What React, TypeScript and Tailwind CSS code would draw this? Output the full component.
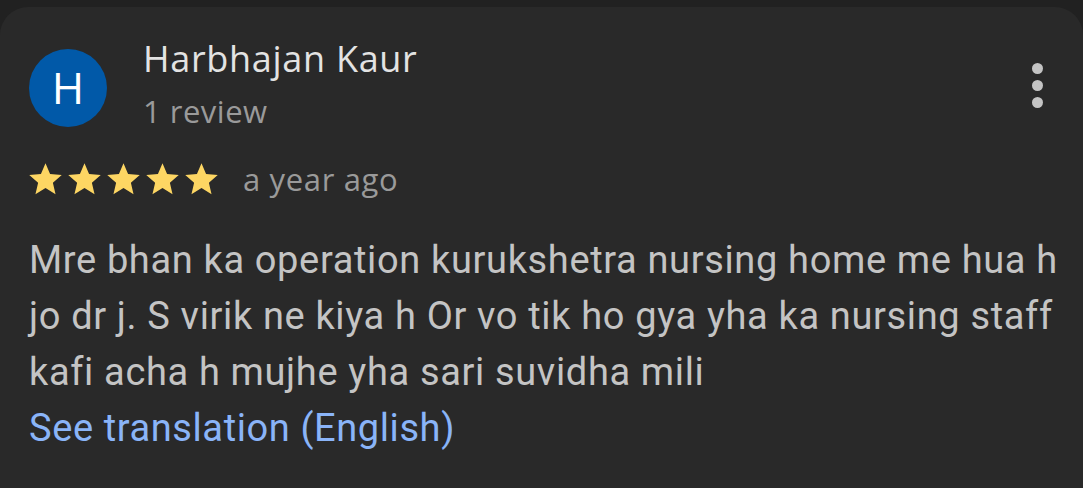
import React from 'react';

const Star: React.FC = () => (
  <svg viewBox="0 0 24 24" className="h-[39px] w-[39px]" fill="#fdd663">
    <path d="M12 17.27 18.18 21l-1.64-7.03L22 9.24l-7.19-.61L12 2 9.19 8.63 2 9.24l5.46 4.73L5.82 21z" />
  </svg>
);

export default function App() {
  return (
    <div className="h-[488px] w-[1083px] overflow-hidden bg-[#212121] pt-[7px]">
      <div className="h-full rounded-t-[28px] bg-[#292929] pl-[29px] pr-[14px] font-['Roboto',sans-serif]">
        {/* header */}
        <div className="flex items-start pt-[42px]">
          <div className="flex h-[78px] w-[78px] shrink-0 items-center justify-center rounded-full bg-[#0159a8] pb-[3px] text-[44px] leading-none text-white font-['Open_Sans',sans-serif]">
            H
          </div>
          <div className="-mt-[12px] ml-[36px] flex-1 font-['Open_Sans',sans-serif]">
            <div className="text-[36px] leading-[44px] tracking-[0.7px] text-[#e3e3e3]">Harbhajan Kaur</div>
            <div className="mt-[12px] text-[31px] leading-[36px] tracking-[0.5px] text-[#9a9a9a]">1 review</div>
          </div>
          <div className="mr-[26px] mt-[14px] flex flex-col items-center gap-[6px]">
            <span className="h-[11px] w-[11px] rounded-full bg-[#c4c4c4]" />
            <span className="h-[11px] w-[11px] rounded-full bg-[#c4c4c4]" />
            <span className="h-[11px] w-[11px] rounded-full bg-[#c4c4c4]" />
          </div>
        </div>

        {/* rating */}
        <div className="mt-[31px] flex h-[39px] items-center">
          <div className="-ml-[3px] flex">
            <Star />
            <Star />
            <Star />
            <Star />
            <Star />
          </div>
          <span className="ml-[22px] text-[31px] leading-none tracking-[0.65px] text-[#9a9a9a] font-['Open_Sans',sans-serif]">
            a year ago
          </span>
        </div>

        {/* body */}
        <p className="mt-[33px] text-[38px] leading-[56px] tracking-[0.65px] text-[#c4c4c4]">
          Mre bhan ka operation kurukshetra nursing home me hua h jo dr j. S virik ne kiya h Or vo tik ho gya yha ka
          nursing staff kafi acha h mujhe yha sari suvidha mili
        </p>
        <div className="text-[38px] leading-[56px] tracking-[0.6px] text-[#8ab4f8]">See translation (English)</div>
      </div>
    </div>
  );
}
